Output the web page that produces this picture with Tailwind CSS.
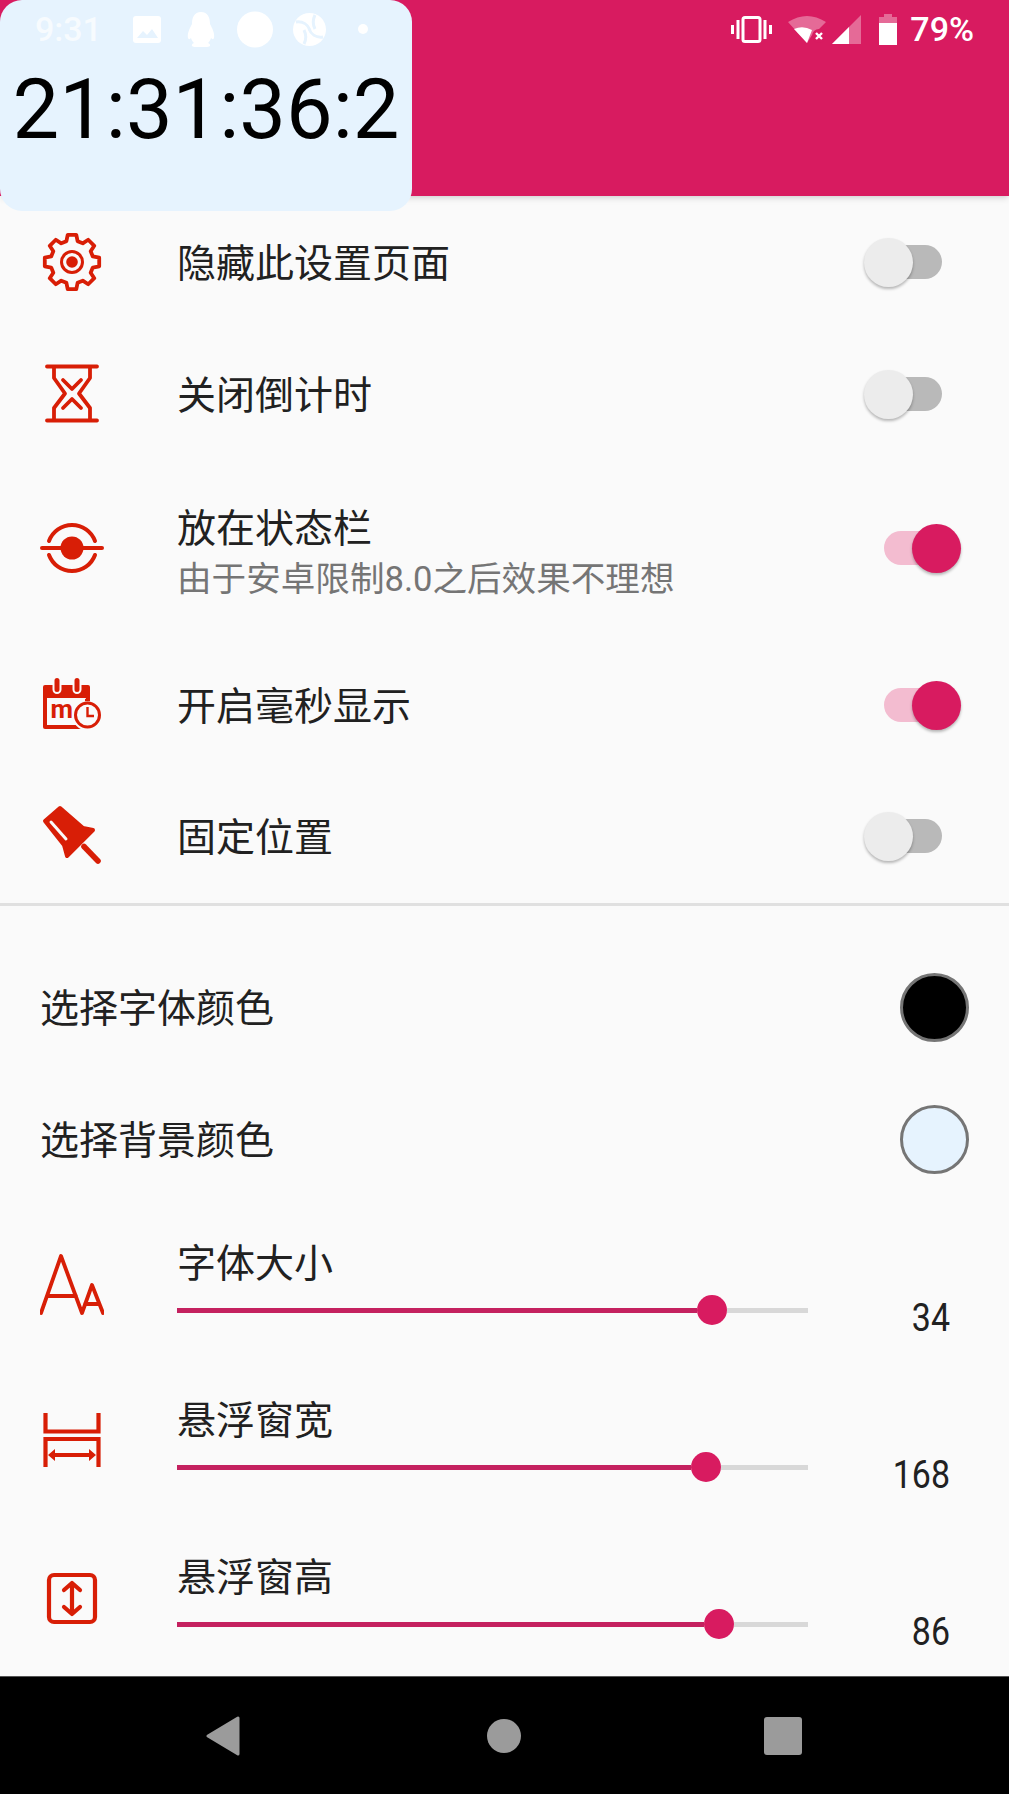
<!DOCTYPE html>
<html lang="en">
  <head>
    <meta charset="UTF-8" />
    <meta name="viewport" content="width=device-width, initial-scale=1.0" />
    <script src="https://cdn.jsdelivr.net/npm/@tailwindcss/browser@4"></script>
    <title>悬浮时钟设置</title>
  </head>
  <body class="bg-[#fafafa]">
    <div class="relative w-[1009px] h-[1794px] overflow-hidden bg-[#fafafa] font-[Roboto,'Noto_Sans_CJK_SC',sans-serif] text-[#212121]">
      <!-- status bar, drawn over the floating clock -->
      <div class="absolute top-0 left-0 z-20 w-full h-[58px] flex items-center pl-[35px] pr-[35px] text-white">
        <span class="text-[34px] leading-none font-medium text-white/70 w-[63px]">9:31</span>
        <svg class="ml-[35px]" width="28" height="27" viewBox="0 0 28 27">
          <rect width="28" height="27" rx="3" fill="#fff" />
          <path d="M4 22 L10 15 L14 19 L19 13 L25 22Z" fill="#e6f3fe" />
        </svg>
        <svg class="ml-[26px]" width="28" height="35" viewBox="0 0 28 35">
          <path d="M14 0 C21 0 23 6 23 12 C25 16 28 21 27 26 C26 28 25 27 24 26 C23 29 22 30 21 31 C24 32 24 35 20 35 L8 35 C4 35 4 32 7 31 C6 30 5 29 4 26 C3 27 2 28 1 26 C0 21 3 16 5 12 C5 6 7 0 14 0Z" fill="#fff" />
        </svg>
        <svg class="ml-[22px]" width="36" height="37" viewBox="0 0 36 37">
          <circle cx="18" cy="18.5" r="18" fill="#fff" />
        </svg>
        <svg class="ml-[20px]" width="33" height="33" viewBox="0 0 33 33">
          <circle cx="16.5" cy="16.5" r="16.5" fill="#fff" />
          <path d="M3 9 C10 8 15 12 17 17 M30 24 C23 25 18 21 16 16 M22 2 C19 8 20 12 22 16 M11 31 C14 25 13 21 11 17" fill="none" stroke="#e6f3fe" stroke-width="3" />
        </svg>
        <span class="ml-[32px] w-[10px] h-[10px] rounded-full bg-white"></span>

        <svg class="ml-auto" width="41" height="27" viewBox="0 0 41 27">
          <rect x="12" y="1.5" width="17" height="24" rx="2" fill="none" stroke="#fff" stroke-width="3" />
          <path d="M1.5 9 V18 M7 4 V23 M34 4 V23 M39.5 9 V18" stroke="#fff" stroke-width="3" fill="none" />
        </svg>
        <svg class="ml-[16px]" width="38" height="27" viewBox="0 0 38 27">
          <path d="M0 6 Q19 -6 38 6 L28 16 L24 19 L19 27Z" fill="#fff" fill-opacity=".35" />
          <path d="M6 13 Q15 9 24 14 L19 27Z" fill="#fff" />
          <circle cx="31" cy="20" r="7" fill="#d81b60" />
          <path d="M28 17 L34 23 M34 17 L28 23" stroke="#fff" stroke-width="2.4" />
        </svg>
        <svg class="ml-[6px]" width="29" height="29" viewBox="0 0 29 29">
          <path d="M29 0 V29 H0Z" fill="#fff" fill-opacity=".35" />
          <path d="M17 12 V29 H0Z" fill="#fff" />
        </svg>
        <svg class="ml-[18px]" width="18" height="31" viewBox="0 0 18 31">
          <path d="M5 0 H13 V3 H18 V31 H0 V3 H5Z" fill="#fff" fill-opacity=".35" />
          <path d="M0 9 H18 V31 H0Z" fill="#fff" />
        </svg>
        <span class="ml-[13px] text-[34px] leading-none font-medium">79%</span>
      </div>

      <!-- floating clock -->
      <div class="absolute top-0 left-0 z-10 w-[412px] h-[211px] rounded-[22px] bg-[#e6f3fe] flex justify-center pt-[60px] text-black text-[83px] leading-[100px]">
        21:31:36:2
      </div>

      <header class="relative h-[196px] bg-[#d81b60] shadow-md"></header>

      <main>
        <div class="h-[132px] flex items-center pl-[40px]">
          <svg class="mr-[73px]" width="64" height="64" viewBox="0 0 64 64" fill="none" stroke="#d81e06" stroke-width="3.8" stroke-linejoin="round">
            <path d="M52.8 26.4 L59.2 27.7 L59.2 36.3 L52.8 37.6 L50.67 42.75 L54.27 48.19 L48.19 54.27 L42.75 50.67 L37.6 52.8 L36.3 59.2 L27.7 59.2 L26.4 52.8 L21.25 50.67 L15.81 54.27 L9.73 48.19 L13.33 42.75 L11.2 37.6 L4.8 36.3 L4.8 27.7 L11.2 26.4 L13.33 21.25 L9.73 15.81 L15.81 9.73 L21.25 13.33 L26.4 11.2 L27.7 4.8 L36.3 4.8 L37.6 11.2 L42.75 13.33 L48.19 9.73 L54.27 15.81 L50.67 21.25Z" />
            <circle cx="32" cy="32" r="10.5" stroke-width="3" />
            <circle cx="32" cy="32" r="5.8" fill="#d81e06" stroke="none" />
          </svg>
          <span class="text-[39px] leading-none pt-[5px]">隐藏此设置页面</span>
          <div class="ml-auto mr-[48px] relative w-[97px] h-[49px] flex items-center pl-[20px]">
            <div class="w-[58px] h-[34px] rounded-full bg-[#b9b9b9]"></div>
            <div class="absolute left-0 top-0 w-[49px] h-[49px] rounded-full bg-[#ececec] shadow-[0_2px_3px_rgba(0,0,0,0.28)]"></div>
          </div>
        </div>

        <div class="h-[132px] flex items-center pl-[40px]">
          <svg class="mr-[73px]" width="64" height="64" viewBox="0 0 64 64" fill="none" stroke="#d81e06" stroke-width="3.8" stroke-linecap="round" stroke-linejoin="round">
            <path d="M7 4.5 H57 M7 58.5 H57" />
            <path d="M14 5 V16 L25 31.5 L14 46 V58 M50 5 V16 L39 31.5 L50 46 V58" />
            <path d="M23 18 L32 27 L41 18 M23 46 L32 37 L41 46" />
          </svg>
          <span class="text-[39px] leading-none pt-[5px]">关闭倒计时</span>
          <div class="ml-auto mr-[48px] relative w-[97px] h-[49px] flex items-center pl-[20px]">
            <div class="w-[58px] h-[34px] rounded-full bg-[#b9b9b9]"></div>
            <div class="absolute left-0 top-0 w-[49px] h-[49px] rounded-full bg-[#ececec] shadow-[0_2px_3px_rgba(0,0,0,0.28)]"></div>
          </div>
        </div>

        <div class="h-[176px] flex items-center pl-[40px]">
          <svg class="mr-[73px]" width="64" height="64" viewBox="0 0 64 64" fill="none" stroke="#d81e06" stroke-width="4" stroke-linecap="round">
            <path d="M9 25 A24.5 24.5 0 0 1 55 25 M9 39 A24.5 24.5 0 0 0 55 39" />
            <path d="M2 32 H62" />
            <circle cx="32" cy="32" r="11.5" fill="#d81e06" stroke="none" />
          </svg>
          <div class="pt-[11px]">
            <div class="text-[39px] leading-[50px]">放在状态栏</div>
            <div class="text-[34.6px] leading-[50px] text-[#757575]">由于安卓限制8.0之后效果不理想</div>
          </div>
          <div class="ml-auto mr-[48px] relative w-[97px] h-[49px] flex items-center pl-[20px]">
            <div class="w-[58px] h-[34px] rounded-full bg-[#f3bcd0]"></div>
            <div class="absolute right-0 top-0 w-[49px] h-[49px] rounded-full bg-[#d81b60] shadow-[0_2px_3px_rgba(0,0,0,0.28)]"></div>
          </div>
        </div>

        <div class="h-[138px] flex items-center pl-[40px]">
          <svg class="mr-[73px]" width="64" height="64" viewBox="0 0 64 64">
            <rect x="3" y="12" width="47" height="44" rx="2" fill="#d81e06" />
            <rect x="7" y="25" width="39" height="27" fill="#fafafa" />
            <rect x="13.5" y="4" width="7" height="16" rx="3.5" fill="#d81e06" stroke="#fafafa" stroke-width="2" />
            <rect x="33.5" y="4" width="7" height="16" rx="3.5" fill="#d81e06" stroke="#fafafa" stroke-width="2" />
            <text x="10.5" y="45" font-family="Roboto" font-weight="700" font-size="26" fill="#d81e06">m</text>
            <circle cx="47.5" cy="42" r="15.5" fill="#fafafa" />
            <circle cx="47.5" cy="42" r="12" fill="#fafafa" stroke="#d81e06" stroke-width="3" />
            <path d="M47.5 34 V43 H54" fill="none" stroke="#d81e06" stroke-width="2.4" />
            <path d="M45 27 H50" stroke="#d81e06" stroke-width="2.4" />
          </svg>
          <span class="text-[39px] leading-none pt-[5px]">开启毫秒显示</span>
          <div class="ml-auto mr-[48px] relative w-[97px] h-[49px] flex items-center pl-[20px]">
            <div class="w-[58px] h-[34px] rounded-full bg-[#f3bcd0]"></div>
            <div class="absolute right-0 top-0 w-[49px] h-[49px] rounded-full bg-[#d81b60] shadow-[0_2px_3px_rgba(0,0,0,0.28)]"></div>
          </div>
        </div>

        <div class="h-[124px] flex items-center pl-[40px]">
          <svg class="mr-[73px]" width="64" height="64" viewBox="0 0 64 64">
            <path d="M5 17 L20 4 L43 24 L53 26 L27 52 L24 41Z" fill="#d81e06" stroke="#d81e06" stroke-width="4" stroke-linejoin="round" />
            <path d="M11 18 L26 35" stroke="#fafafa" stroke-width="3" stroke-linecap="round" />
            <path d="M44 42.5 L58 57" stroke="#d81e06" stroke-width="5.6" stroke-linecap="round" />
          </svg>
          <span class="text-[39px] leading-none pt-[5px]">固定位置</span>
          <div class="ml-auto mr-[48px] relative w-[97px] h-[49px] flex items-center pl-[20px]">
            <div class="w-[58px] h-[34px] rounded-full bg-[#b9b9b9]"></div>
            <div class="absolute left-0 top-0 w-[49px] h-[49px] rounded-full bg-[#ececec] shadow-[0_2px_3px_rgba(0,0,0,0.28)]"></div>
          </div>
        </div>

        <div class="mt-[5px] h-[3px] bg-[#e0e0e0]"></div>

        <div class="mt-[35px] h-[132px] flex items-center justify-between pl-[40px] pr-[40px]">
          <span class="text-[39px] leading-none pt-[5px]">选择字体颜色</span>
          <div class="w-[69px] h-[69px] rounded-full bg-black border-[3px] border-[#757575]"></div>
        </div>
        <div class="h-[132px] flex items-center justify-between pl-[40px] pr-[40px]">
          <span class="text-[39px] leading-none pt-[5px]">选择背景颜色</span>
          <div class="w-[69px] h-[69px] rounded-full bg-[#e6f3fe] border-[3px] border-[#757575]"></div>
        </div>

        <div class="h-[157px] flex items-center pl-[40px]">
          <svg class="mr-[73px] shrink-0" width="64" height="64" viewBox="0 0 64 64" fill="none" stroke="#d81e06" stroke-width="3.8" stroke-linecap="round" stroke-linejoin="round">
            <path d="M1 61 L21 4 L42 61 L52 33 L63 61 M7 44 H36 M45 52 H59" />
          </svg>
          <div class="self-start pt-[32px] w-[631px] shrink-0">
            <div class="text-[39px] leading-[54px]">字体大小</div>
            <div class="mt-[4px] h-[30px] flex items-center">
              <div class="w-[520px] h-[5px] bg-[#c4215f]"></div>
              <div class="w-[30px] h-[30px] rounded-full bg-[#d81b60] shrink-0"></div>
              <div class="flex-1 h-[5px] bg-[#d8d8d8]"></div>
            </div>
          </div>
          <div class="self-start mt-[93px] w-[142px] text-right text-[39px] leading-[40px] scale-x-[0.87] origin-right">34</div>
        </div>

        <div class="h-[157px] flex items-center pl-[40px]">
          <svg class="mr-[73px] shrink-0" width="64" height="64" viewBox="0 0 64 64" fill="none" stroke="#d81e06" stroke-width="4.2">
            <path d="M5.5 4 V22.5 H58.5 V4" />
            <path d="M5.5 58 V30 H58.5 V58" />
            <path d="M12 46 H52" />
            <path d="M8 46 L15 40 V52Z M56 46 L49 40 V52Z" fill="#d81e06" stroke="none" />
          </svg>
          <div class="self-start pt-[32px] w-[631px] shrink-0">
            <div class="text-[39px] leading-[54px]">悬浮窗宽</div>
            <div class="mt-[4px] h-[30px] flex items-center">
              <div class="w-[514px] h-[5px] bg-[#c4215f]"></div>
              <div class="w-[30px] h-[30px] rounded-full bg-[#d81b60] shrink-0"></div>
              <div class="flex-1 h-[5px] bg-[#d8d8d8]"></div>
            </div>
          </div>
          <div class="self-start mt-[93px] w-[142px] text-right text-[39px] leading-[40px] scale-x-[0.87] origin-right">168</div>
        </div>

        <div class="h-[157px] flex items-center pl-[40px]">
          <svg class="mr-[73px] shrink-0" width="64" height="64" viewBox="0 0 64 64" fill="none" stroke="#d81e06" stroke-width="4.2" stroke-linecap="round" stroke-linejoin="round">
            <rect x="9" y="9" width="46" height="47" rx="5" />
            <path d="M32 17 V48 M24 24 L32 17 L40 24 M24 41 L32 48 L40 41" />
          </svg>
          <div class="self-start pt-[32px] w-[631px] shrink-0">
            <div class="text-[39px] leading-[54px]">悬浮窗高</div>
            <div class="mt-[4px] h-[30px] flex items-center">
              <div class="w-[527px] h-[5px] bg-[#c4215f]"></div>
              <div class="w-[30px] h-[30px] rounded-full bg-[#d81b60] shrink-0"></div>
              <div class="flex-1 h-[5px] bg-[#d8d8d8]"></div>
            </div>
          </div>
          <div class="self-start mt-[93px] w-[142px] text-right text-[39px] leading-[40px] scale-x-[0.87] origin-right">86</div>
        </div>
      </main>

      <nav class="h-[118px] bg-black border-t border-[#555] flex items-center pl-[206px]">
        <svg width="34" height="40" viewBox="0 0 34 40">
          <path d="M32 2 V38 L2 20Z" fill="#9b9b9b" stroke="#9b9b9b" stroke-width="3" stroke-linejoin="round" />
        </svg>
        <div class="ml-[247px] w-[34px] h-[34px] rounded-full bg-[#9b9b9b]"></div>
        <div class="ml-[243px] w-[38px] h-[38px] rounded-[3px] bg-[#9b9b9b]"></div>
      </nav>
    </div>
  </body>
</html>
